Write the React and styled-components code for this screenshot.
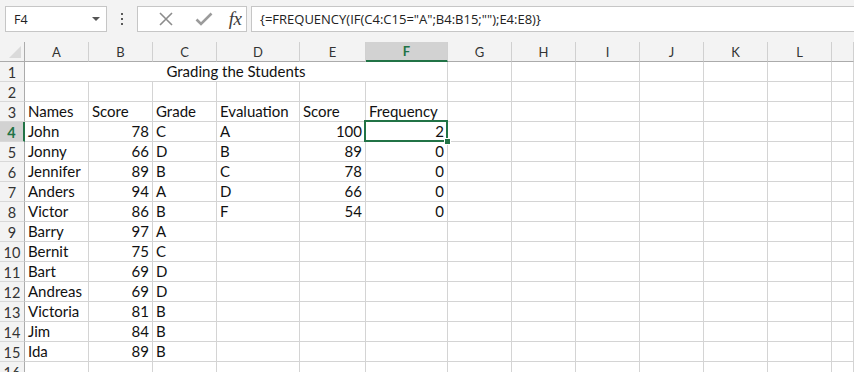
import React from 'react';
import styled, { createGlobalStyle, css } from 'styled-components';

const GREEN = '#217346';
const GRID = '#d4d4d4';

const GlobalStyle = createGlobalStyle`
  html, body {
    margin: 0;
    padding: 0;
    width: 854px;
    height: 372px;
    overflow: hidden;
    background: #ffffff;
  }
`;

const Page = styled.div`
  width: 854px;
  height: 372px;
  overflow: hidden;
  background: #f3f3f3;
`;

const FormulaBar = styled.div`
  display: flex;
  align-items: center;
  height: 26px;
  padding: 6px 0 0 5px;
`;

const NameBox = styled.div`
  box-sizing: border-box;
  width: 102px;
  height: 26px;
  background: #fff;
  border: 1px solid #c6c6c6;
  display: flex;
  align-items: center;
  justify-content: space-between;
  padding: 0 6px 0 8px;
  font-family: 'Open Sans', 'Noto Sans', sans-serif;
  font-size: 12.5px;
  color: #222;
`;

const Caret = styled.span`
  width: 0;
  height: 0;
  border-left: 4px solid transparent;
  border-right: 4px solid transparent;
  border-top: 4px solid #555;
`;

const Dots = styled.div`
  width: 30px;
  display: flex;
  flex-direction: column;
  align-items: center;
  gap: 3px;
  span {
    width: 2px;
    height: 2px;
    background: #5a5a5a;
  }
`;

const FxBox = styled.div`
  box-sizing: border-box;
  width: 110px;
  height: 26px;
  background: #fff;
  border: 1px solid #c6c6c6;
  display: flex;
  align-items: center;
  padding: 0 0 0 10px;
`;

const IconSlot = styled.div`
  width: ${p => p.$w}px;
  display: flex;
  align-items: center;
  justify-content: center;
`;

const Fx = styled.span`
  font-family: 'Liberation Serif', 'DejaVu Serif', serif;
  font-style: italic;
  font-size: 19px;
  color: #3d3d3d;
  letter-spacing: -0.5px;
  line-height: 1;
  margin-top: -2px;
`;

const FormulaInput = styled.div`
  box-sizing: border-box;
  flex: 1;
  height: 26px;
  margin-left: 4px;
  background: #fff;
  border: 1px solid #c6c6c6;
  border-right: none;
  display: flex;
  align-items: center;
  padding-left: 8px;
  font-family: 'Open Sans', 'Noto Sans', sans-serif;
  font-size: 13px;
  color: #222;
`;

const COLS = [25, 64, 64, 64, 83, 66, 82, 64, 64, 64, 64, 64, 64, 22];

const Sheet = styled.div`
  margin-top: 10px;
  display: grid;
  grid-template-columns: ${COLS.map(c => c + 'px').join(' ')};
  grid-auto-rows: 20px;
  background: #fff;
`;

const HeaderCell = styled.div`
  box-sizing: border-box;
  background: #f3f3f3;
  border-right: 1px solid #d0d0d0;
  border-bottom: 1px solid #ababab;
  display: flex;
  align-items: center;
  justify-content: center;
  font-family: 'Lato', 'Open Sans', sans-serif;
  font-size: 13px;
  color: #333;
  ${p => p.$active && css`
    background: #d2d2d2;
    color: ${GREEN};
    font-weight: bold;
    border-bottom: 2px solid ${GREEN};
  `}
`;

const Corner = styled(HeaderCell)`
  position: relative;
  border-right: 1px solid #ababab;
  &::after {
    content: '';
    position: absolute;
    right: 3px;
    bottom: 3px;
    width: 0;
    height: 0;
    border-left: 12px solid transparent;
    border-bottom: 12px solid #dadada;
  }
`;

const RowHead = styled.div`
  box-sizing: border-box;
  background: #f3f3f3;
  border-right: 1px solid #ababab;
  border-bottom: 1px solid #d8d8d8;
  display: flex;
  align-items: center;
  justify-content: center;
  padding-top: 1px;
  font-family: 'Lato', 'Open Sans', sans-serif;
  font-size: 14.5px;
  color: #333;
  ${p => p.$active && css`
    background: #d2d2d2;
    color: ${GREEN};
    font-weight: bold;
    border-right: 2px solid ${GREEN};
  `}
`;

const Cell = styled.div`
  box-sizing: border-box;
  position: relative;
  border-right: 1px solid ${GRID};
  border-bottom: 1px solid ${GRID};
  display: flex;
  align-items: flex-end;
  justify-content: ${p => (p.$align === 'right' ? 'flex-end' : p.$align === 'center' ? 'center' : 'flex-start')};
  padding: 0 3px 1px;
  font-family: 'Lato', 'Open Sans', sans-serif;
  font-size: 15px;
  color: #111;
  white-space: nowrap;
  grid-column: ${p => (p.$span ? `span ${p.$span}` : 'auto')};
  ${p => p.$selected && css`
    &::after {
      content: '';
      position: absolute;
      left: -2px;
      top: -2px;
      right: -1px;
      bottom: -1px;
      border: 2px solid ${GREEN};
      pointer-events: none;
    }
    &::before {
      content: '';
      position: absolute;
      right: -4px;
      bottom: -4px;
      width: 5px;
      height: 5px;
      background: ${GREEN};
      border: 1px solid #fff;
      z-index: 2;
    }
  `}
`;

const LETTERS = ['A', 'B', 'C', 'D', 'E', 'F', 'G', 'H', 'I', 'J', 'K', 'L', ''];

const students = [
  ['John', 78, 'C'],
  ['Jonny', 66, 'D'],
  ['Jennifer', 89, 'B'],
  ['Anders', 94, 'A'],
  ['Victor', 86, 'B'],
  ['Barry', 97, 'A'],
  ['Bernit', 75, 'C'],
  ['Bart', 69, 'D'],
  ['Andreas', 69, 'D'],
  ['Victoria', 81, 'B'],
  ['Jim', 84, 'B'],
  ['Ida', 89, 'B'],
];

const bins = [
  ['A', 100, 2],
  ['B', 89, 0],
  ['C', 78, 0],
  ['D', 66, 0],
  ['F', 54, 0],
];

const emptyCells = (count, from) =>
  Array.from({ length: count }, (_, i) => <Cell key={`e${from + i}`} />);

const rowCells = (r) => {
  if (r === 1) {
    return [
      <Cell key="t" $span={6} $align="center">Grading the Students</Cell>,
      ...emptyCells(7, 6),
    ];
  }
  if (r === 2) return emptyCells(13, 0);
  if (r === 3) {
    return [
      <Cell key="a">Names</Cell>,
      <Cell key="b">Score</Cell>,
      <Cell key="c">Grade</Cell>,
      <Cell key="d">Evaluation</Cell>,
      <Cell key="e">Score</Cell>,
      <Cell key="f">Frequency</Cell>,
      ...emptyCells(7, 6),
    ];
  }
  const s = students[r - 4];
  if (!s) return emptyCells(13, 0);
  const b = bins[r - 4];
  return [
    <Cell key="a">{s[0]}</Cell>,
    <Cell key="b" $align="right">{s[1]}</Cell>,
    <Cell key="c">{s[2]}</Cell>,
    <Cell key="d">{b ? b[0] : ''}</Cell>,
    <Cell key="e" $align="right">{b ? b[1] : ''}</Cell>,
    <Cell key="f" $align="right" $selected={r === 4}>{b ? b[2] : ''}</Cell>,
    ...emptyCells(7, 6),
  ];
};

const CrossIcon = () => (
  <svg width="16" height="16" viewBox="0 0 16 16">
    <path d="M2 2 L14 14 M14 2 L2 14" stroke="#8c8c8c" strokeWidth="1.6" fill="none" />
  </svg>
);

const CheckIcon = () => (
  <svg width="18" height="16" viewBox="0 0 18 16">
    <path d="M1.5 8.5 L6 13 L16.5 2.5" stroke="#9b9b9b" strokeWidth="2.6" fill="none" />
  </svg>
);

const FORMULA = '{=FREQUENCY(IF(C4:C15="A";B4:B15;""));E4:E8)}'.replace('""))', '"")');

export default function App() {
  const rows = Array.from({ length: 16 }, (_, i) => i + 1);
  return (
    <Page>
      <GlobalStyle />
      <FormulaBar>
        <NameBox>
          F4
          <Caret />
        </NameBox>
        <Dots>
          <span />
          <span />
          <span />
        </Dots>
        <FxBox>
          <IconSlot $w={36}><CrossIcon /></IconSlot>
          <IconSlot $w={40}><CheckIcon /></IconSlot>
          <IconSlot $w={22}><Fx>fx</Fx></IconSlot>
        </FxBox>
        <FormulaInput>{FORMULA}</FormulaInput>
      </FormulaBar>
      <Sheet>
        <Corner />
        {LETTERS.map((l, i) => (
          <HeaderCell key={l + i} $active={l === 'F'}>{l}</HeaderCell>
        ))}
        {rows.map(r => (
          <React.Fragment key={r}>
            <RowHead $active={r === 4}>{r}</RowHead>
            {rowCells(r)}
          </React.Fragment>
        ))}
      </Sheet>
    </Page>
  );
}
